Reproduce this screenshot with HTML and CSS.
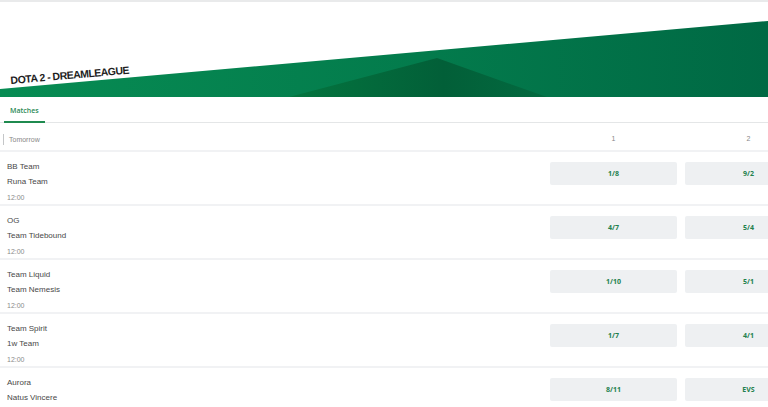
FILE: index.html
```html
<!DOCTYPE html>
<html lang="en">
<head>
    <meta charset="UTF-8">
    <meta name="viewport" content="width=device-width, initial-scale=1.0">
    <title>Dota 2 - DreamLeague</title>
    <link rel="stylesheet" href="styles.css">
</head>
<body>
    <div class="topline"></div>

    <header class="banner">
        <svg class="banner-art" viewBox="0 0 768 95" preserveAspectRatio="none">
            <defs>
                <linearGradient id="wedge" x1="0" y1="0" x2="1" y2="0">
                    <stop offset="0" stop-color="#078c53"/>
                    <stop offset="0.55" stop-color="#037b4c"/>
                    <stop offset="1" stop-color="#006944"/>
                </linearGradient>
                <linearGradient id="peak" x1="0" y1="0" x2="1" y2="0">
                    <stop offset="0" stop-color="#04753f"/>
                    <stop offset="0.6" stop-color="#025f38"/>
                    <stop offset="1" stop-color="#036a40"/>
                </linearGradient>
            </defs>
            <polygon points="0,87 768,19 768,95 0,95" fill="url(#wedge)"/>
            <polygon points="289,95 437,56 547,95" fill="url(#peak)"/>
        </svg>
        <h1 class="banner-title">DOTA 2 - DREAMLEAGUE</h1>
    </header>

    <nav class="tabs">
        <span class="tab active">Matches</span>
    </nav>

    <section class="board">
        <div class="day-row">
            <div class="day">Tomorrow</div>
            <div class="col-head">1</div>
            <div class="col-head">2</div>
        </div>

        <div class="match">
            <div class="teams">
                <div class="team">BB Team</div>
                <div class="team">Runa Team</div>
                <div class="time">12:00</div>
            </div>
            <button class="odd">1/8</button>
            <button class="odd">9/2</button>
        </div>

        <div class="match">
            <div class="teams">
                <div class="team">OG</div>
                <div class="team">Team Tidebound</div>
                <div class="time">12:00</div>
            </div>
            <button class="odd">4/7</button>
            <button class="odd">5/4</button>
        </div>

        <div class="match">
            <div class="teams">
                <div class="team">Team Liquid</div>
                <div class="team">Team Nemesis</div>
                <div class="time">12:00</div>
            </div>
            <button class="odd">1/10</button>
            <button class="odd">5/1</button>
        </div>

        <div class="match">
            <div class="teams">
                <div class="team">Team Spirit</div>
                <div class="team">1w Team</div>
                <div class="time">12:00</div>
            </div>
            <button class="odd">1/7</button>
            <button class="odd">4/1</button>
        </div>

        <div class="match">
            <div class="teams">
                <div class="team">Aurora</div>
                <div class="team">Natus Vincere</div>
            </div>
            <button class="odd">8/11</button>
            <button class="odd">EVS</button>
        </div>
    </section>
</body>
</html>
```

FILE: styles.css
```css
body {
    margin: 0;
    font-family: "Liberation Sans", Arial, sans-serif;
    background-color: #ffffff;
    color: #444;
    overflow: hidden;
}

.topline {
    height: 2px;
    background-color: #e9eaeb;
}

/* header with the green wedge */
.banner {
    position: relative;
    height: 95px;
}

.banner-art {
    display: block;
    width: 100%;
    height: 95px;
}

.banner-title {
    position: absolute;
    left: 11px;
    top: 73px;
    margin: 0;
    font-family: "Liberation Sans", Arial, sans-serif;
    font-size: 10.5px;
    line-height: 11px;
    font-weight: bold;
    letter-spacing: -0.5px;
    color: #1e1e1e;
    transform: rotate(-5deg);
    transform-origin: left bottom;
    white-space: nowrap;
}

.tabs {
    display: flex;
    height: 25px;
    padding-left: 4px;
    border-bottom: 1px solid #e4e6e7;
}

.tab {
    padding: 3px 6px 0;
    line-height: 21px;
    font-family: "Open Sans", Arial, sans-serif;
    font-size: 7px;
    font-weight: 600;
    color: #2c8a56;
}

.tab.active {
    border-bottom: 2px solid #1f8a4f;
    margin-bottom: -1px;
}

/* odds table */
.board {
    width: 812px;
}

.day-row,
.match {
    display: flex;
    gap: 8px;
    border-bottom: 2px solid #f1f2f4;
}

.day-row {
    height: 23px;
    padding-top: 4px;
    line-height: 23px;
    font-size: 7px;
    color: #888;
}

.day {
    flex: 1;
    margin-left: 3px;
    padding-left: 5px;
    border-left: 1px solid #c4c6c8;
    line-height: 11px;
    margin-top: 7px;
    height: 11px;
}

.col-head {
    width: 127px;
    text-align: center;
}

.match {
    height: 45px;
    padding-top: 7px;
}

.teams {
    flex: 1;
    padding-left: 7px;
}

.team {
    font-size: 8px;
    line-height: 15px;
    color: #484848;
}

.time {
    margin-top: 3px;
    font-size: 7px;
    line-height: 12px;
    color: #8a8a8a;
}

.odd {
    width: 127px;
    height: 23px;
    margin-top: 3px;
    padding: 0;
    border: none;
    border-radius: 2px;
    background-color: #eef0f2;
    font-family: "Open Sans", Arial, sans-serif;
    font-size: 7px;
    font-weight: bold;
    color: #23804d;
}
```
